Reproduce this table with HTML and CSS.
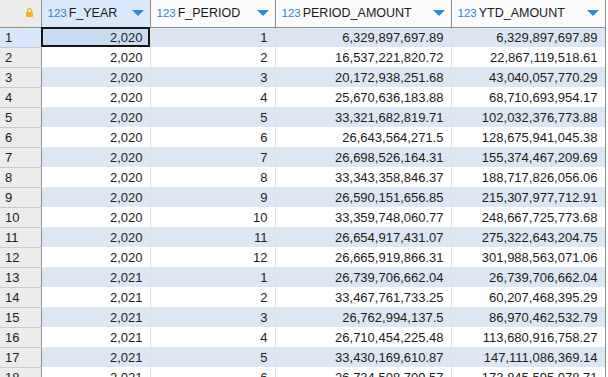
FILE: index.html
```html
<!DOCTYPE html>
<html lang="en">
<head>
    <meta charset="UTF-8">
    <title>Result Grid</title>
    <link rel="stylesheet" href="styles.css">
</head>
<body>
    <table class="grid">
        <colgroup>
            <col class="c-num"><col class="c-year"><col class="c-period"><col class="c-pamt"><col class="c-ytd">
        </colgroup>
        <thead>
            <tr>
                <th class="corner">
                    <svg class="lock" width="7" height="9" viewBox="0 0 7 9"><path d="M1.5 4V2.6a2 2 0 0 1 4 0V4" fill="none" stroke="#f2b01e" stroke-width="1.2"/><rect x="0" y="4" width="7" height="5" rx="0.8" fill="#f2b01e"/></svg>
                </th>
                <th class="active"><div class="hd"><span class="type">123</span><span class="name">F_YEAR</span><span class="sort"></span></div></th>
                <th><div class="hd"><span class="type">123</span><span class="name">F_PERIOD</span><span class="sort"></span></div></th>
                <th><div class="hd"><span class="type">123</span><span class="name">PERIOD_AMOUNT</span><span class="sort"></span></div></th>
                <th><div class="hd"><span class="type">123</span><span class="name">YTD_AMOUNT</span><span class="sort"></span></div></th>
            </tr>
        </thead>
        <tbody id="rows"></tbody>
    </table>

<script>
const data=[
 ['2,020','1','6,329,897,697.89','6,329,897,697.89'],
 ['2,020','2','16,537,221,820.72','22,867,119,518.61'],
 ['2,020','3','20,172,938,251.68','43,040,057,770.29'],
 ['2,020','4','25,670,636,183.88','68,710,693,954.17'],
 ['2,020','5','33,321,682,819.71','102,032,376,773.88'],
 ['2,020','6','26,643,564,271.5','128,675,941,045.38'],
 ['2,020','7','26,698,526,164.31','155,374,467,209.69'],
 ['2,020','8','33,343,358,846.37','188,717,826,056.06'],
 ['2,020','9','26,590,151,656.85','215,307,977,712.91'],
 ['2,020','10','33,359,748,060.77','248,667,725,773.68'],
 ['2,020','11','26,654,917,431.07','275,322,643,204.75'],
 ['2,020','12','26,665,919,866.31','301,988,563,071.06'],
 ['2,021','1','26,739,706,662.04','26,739,706,662.04'],
 ['2,021','2','33,467,761,733.25','60,207,468,395.29'],
 ['2,021','3','26,762,994,137.5','86,970,462,532.79'],
 ['2,021','4','26,710,454,225.48','113,680,916,758.27'],
 ['2,021','5','33,430,169,610.87','147,111,086,369.14'],
 ['2,021','6','26,734,508,709.57','173,845,595,078.71']
];
const tbody=document.getElementById('rows');
data.forEach((r,i)=>{
    const cls=i===0?'sel':(i%2===0?'odd':'');
    tbody.insertAdjacentHTML('beforeend',
      `<tr class="${cls}"><td class="num">${i+1}</td>`+
      r.map((v,j)=>`<td class="${i===0&&j===0?'focus':''}">${v}</td>`).join('')+'</tr>');
});
</script>
</body>
</html>
```

FILE: styles.css
```css
*{box-sizing:border-box;}
body{
    margin:0;
    background:#fff;
    font-family:"Liberation Sans",Arial,sans-serif;
    font-size:13px;
    color:#1c1c1c;
    overflow:hidden;
}
.grid{border-collapse:collapse;table-layout:fixed;width:605px;}
.c-num{width:41px;}
.c-year{width:109px;}
.c-period{width:125px;}
.c-pamt{width:176px;}
.c-ytd{width:154px;}

/* header */
th{
    height:27px;
    padding:0;
    background:#fbfbfb;
    border-right:1px solid #8e8e8e;
    border-bottom:1px solid #8e8e8e;
    font-weight:normal;
    text-align:left;
}
th.corner{background:#ececec;text-align:right;padding-right:8px;}
.lock{display:inline-block;vertical-align:middle;margin-top:-4px;}
th.active{background:#d9e9fb;}
.hd{display:flex;align-items:center;padding:0 6px 1px 6px;}
.type{color:#2a87d0;font-size:11.5px;margin-right:2px;}
.name{flex:1;font-size:12.5px;color:#1a1a1a;}
.sort{
    width:0;height:0;
    border-left:6px solid transparent;
    border-right:6px solid transparent;
    border-top:6px solid #2b8cd6;
    margin-top:1px;
}

/* body */
td{
    height:20px;
    padding:0 7px 0 5px;
    text-align:right;
    border-right:1px solid #e2e2e2;
    white-space:nowrap;
    overflow:hidden;
}
td:last-child{border-right:1px solid #8e8e8e;}
td.num{
    text-align:left;
    background:#ececec;
    border-right:1px solid #8e8e8e;
    border-bottom:1px solid #c9c9c9;
    padding-left:5px;
}
tr.odd td{background:#dde7f3;}
tr.odd td.num{background:#ececec;}
tr.sel td{background:#dce6f2;}
tr.sel td.num{background:#d7e7f9;}
tr.sel td.focus{background:#c8dcf2;outline:2px solid #161616;outline-offset:-2px;}
```
